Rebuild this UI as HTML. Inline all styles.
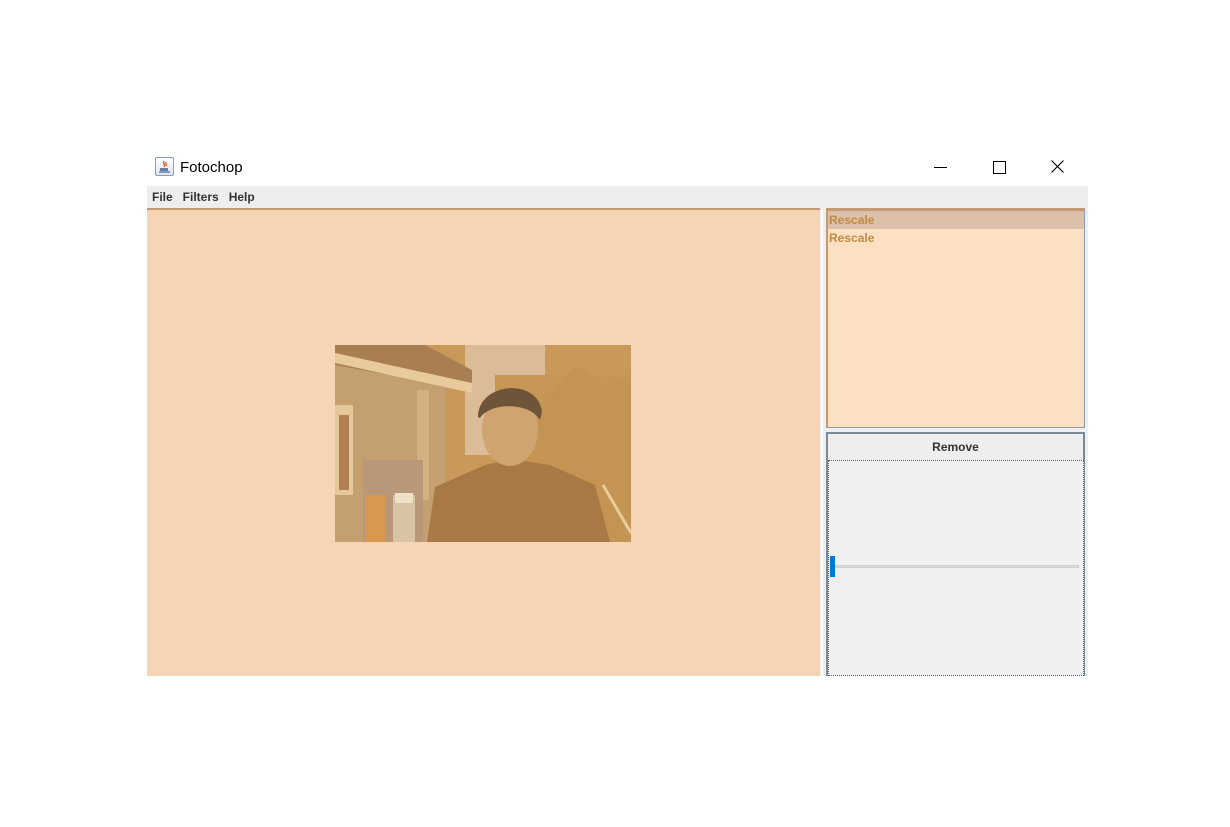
<!DOCTYPE html>
<html><head><meta charset="utf-8"><style>
body{margin:0;width:1230px;height:827px;background:#fff;position:relative;overflow:hidden;font-family:"Liberation Sans",sans-serif}
.a{position:absolute}
</style></head><body>
<div class="a" style="left:155px;top:157px;width:19px;height:19px;border:1px solid #8aa0b8;border-radius:2px;background:linear-gradient(#fff,#dde6f0);box-sizing:border-box">
<svg width="17" height="17" viewBox="0 0 17 17"><path d="M4 10h8v3H4z" fill="#6a7fa0"/><path d="M3 14h11" stroke="#4a5f80" stroke-width="1.2"/><path d="M8 3c-2 2 2 3 0 6M10 4c-1 1 1 2 0 4" stroke="#d8541a" stroke-width="1.3" fill="none"/></svg></div>
<div class="a" style="left:180px;top:159px;font-size:15px;color:#000">Fotochop</div>
<div class="a" style="left:934px;top:167px;width:13px;height:1px;background:#000"></div>
<div class="a" style="left:993px;top:161px;width:11px;height:11px;border:1px solid #000"></div>
<svg class="a" style="left:1051px;top:160px" width="13" height="13"><path d="M0.5 0.5L12.5 12.5M12.5 0.5L0.5 12.5" stroke="#000" stroke-width="1.1"/></svg>
<div class="a" style="left:147px;top:186px;width:941px;height:22px;background:#eeeeee"></div>
<div class="a" style="left:152px;top:190px;font-size:12px;font-weight:bold;color:#333">File&nbsp;&nbsp;&nbsp;Filters&nbsp;&nbsp;&nbsp;Help</div>
<div class="a" style="left:147px;top:208px;width:941px;height:468px;background:#eeeeee"></div>
<div class="a" style="left:147px;top:208px;width:673px;height:2px;background:#c49a74"></div>
<div class="a" style="left:147px;top:210px;width:673px;height:466px;background:#f5d5b5"></div>
<div class="a" style="left:821px;top:210px;width:2px;height:466px;background:#fff"></div>
<svg class="a" style="left:335px;top:345px" width="296" height="197" viewBox="0 0 296 197">
<rect width="296" height="197" fill="#c9995a"/>
<rect x="130" y="0" width="80" height="110" fill="#dcbc98"/>
<rect x="160" y="30" width="136" height="167" fill="#c69654"/>
<path d="M160 197V80l20-30 30 10 30-40 30 20 26-10v167z" fill="#c49453"/>
<rect x="0" y="20" width="110" height="177" fill="#c4a070"/>
<path d="M0 0h90l47 25v20L0 20z" fill="#a87e52"/>
<path d="M0 8l137 30v10L0 18z" fill="#e8ca9c"/>
<rect x="0" y="60" width="18" height="90" fill="#e4c79a"/>
<rect x="4" y="70" width="10" height="75" fill="#b08050"/>
<rect x="82" y="45" width="12" height="110" fill="#d4b080"/>
<rect x="28" y="115" width="60" height="82" fill="#b89878"/>
<rect x="30" y="150" width="20" height="47" fill="#d89850"/>
<rect x="58" y="150" width="22" height="47" fill="#d8c4a4"/>
<rect x="60" y="148" width="18" height="10" fill="#efe0c8"/>
<path d="M92 197l8-55 50-22 25-6 40 6 45 20 15 57z" fill="#a87944"/>
<ellipse cx="175" cy="85" rx="28" ry="36" fill="#cfa470"/>
<path d="M143 72c0-35 60-40 64-5l-2 8c-10-18-50-18-60-2z" fill="#6e5438"/>
<path d="M268 140l28 48" stroke="#e8cc9a" stroke-width="3"/>
</svg>
<div class="a" style="left:826px;top:208px;width:259px;height:220px;background:#c49a74"></div>
<div class="a" style="left:828px;top:211px;width:256px;height:216px;background:#fce0c2"></div>
<div class="a" style="left:828px;top:211px;width:256px;height:18px;background:#dcc0aa"></div>
<div class="a" style="left:829px;top:211px;font-size:12px;font-weight:bold;color:#c08a42;line-height:18px">Rescale<br>Rescale</div>
<div class="a" style="left:1084px;top:210px;width:1px;height:217px;background:#8a9aac"></div>
<div class="a" style="left:826px;top:427px;width:259px;height:1px;background:#8a9aac"></div>
<div class="a" style="left:826px;top:432px;width:259px;height:244px;border:2px solid #7a8a99;border-bottom:none;box-sizing:border-box;background:#eeeeee"></div>
<div class="a" style="left:828px;top:434px;width:255px;height:26px;text-align:center;font-size:12px;font-weight:bold;color:#333;line-height:27px">Remove</div>
<div class="a" style="left:828px;top:460px;width:256px;height:216px;border:1px dotted #666;box-sizing:border-box;background:#f0f0f0"></div>
<div class="a" style="left:832px;top:565px;width:247px;height:3px;background:#dadada;border:1px solid #d0d0d0;box-sizing:border-box"></div>
<div class="a" style="left:830px;top:556px;width:5px;height:21px;background:#0078d7"></div>
</body></html>
